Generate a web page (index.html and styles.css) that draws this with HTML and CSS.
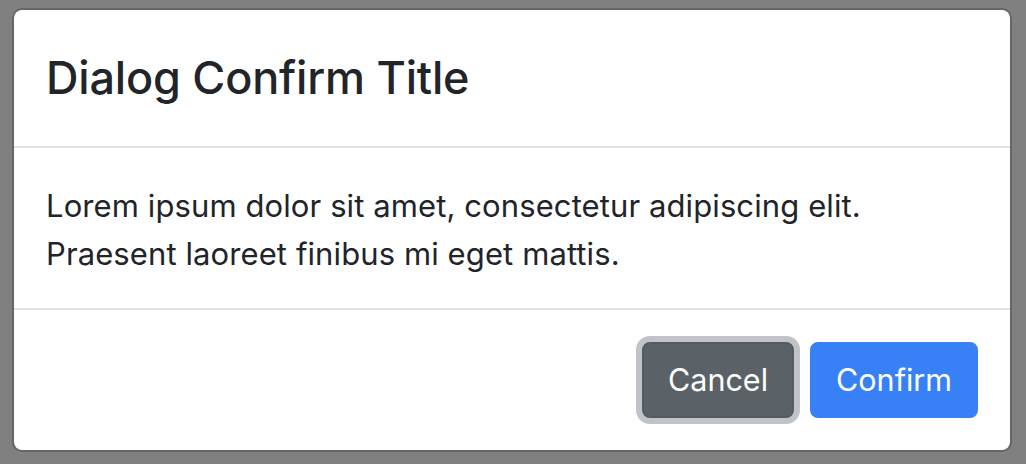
FILE: index.html
```html
<!DOCTYPE html>
<html lang="en">
<head>
<meta charset="utf-8">
<title>Dialog</title>
<link rel="stylesheet" href="styles.css">
</head>
<body>
<div class="modal">
  <div class="modal-header">
    <h5 class="modal-title">Dialog Confirm Title</h5>
  </div>
  <div class="modal-body">
    <p>Lorem ipsum dolor sit amet, consectetur adipiscing elit. Praesent laoreet finibus mi eget mattis.</p>
  </div>
  <div class="modal-footer">
    <button class="btn btn-secondary focus">Cancel</button>
    <button class="btn btn-primary">Confirm</button>
  </div>
</div>
</body>
</html>
```
FILE: styles.css
```css
* { box-sizing: border-box; }
html, body {
  margin: 0;
  padding: 0;
  background: #808080;
  font-family: Inter, "Liberation Sans", sans-serif;
  color: #212529;
}
.modal {
  width: 1000px;
  margin: 8px 0 0 12px;
  background: #fff;
  background-clip: padding-box;
  border: 2px solid rgba(0,0,0,.2);
  border-radius: 10px;
}
.modal-header {
  height: 138px;
  padding: 0 32px;
  display: flex;
  align-items: center;
  border-bottom: 2px solid #dee2e6;
}
.modal-title {
  margin: 0;
  font-size: 45px;
  font-weight: 500;
  line-height: 72px;
  letter-spacing: -0.2px;
}
.modal-body {
  height: 162px;
  padding: 34px 32px 30px;
  border-bottom: 2px solid #dee2e6;
}
.modal-body p {
  margin: 0;
  font-size: 31px;
  line-height: 48px;
  letter-spacing: 0.1px;
  width: 900px;
}
.modal-footer {
  height: 140px;
  padding: 24px;
  display: flex;
  justify-content: flex-end;
  align-items: center;
}
.btn {
  margin: 8px;
  height: 76px;
  padding: 0 24px;
  border: 2px solid transparent;
  border-radius: 8px;
  font-family: inherit;
  font-size: 30.5px;
  color: #fff;
  line-height: 1;
}
.btn-secondary {
  background: #5a6268;
  border-color: #545b62;
}
.btn-secondary.focus {
  box-shadow: 0 0 0 6px rgba(130,138,145,.5);
}
.btn-primary {
  background: #3880f6;
  border-color: #3880f6;
}
```
